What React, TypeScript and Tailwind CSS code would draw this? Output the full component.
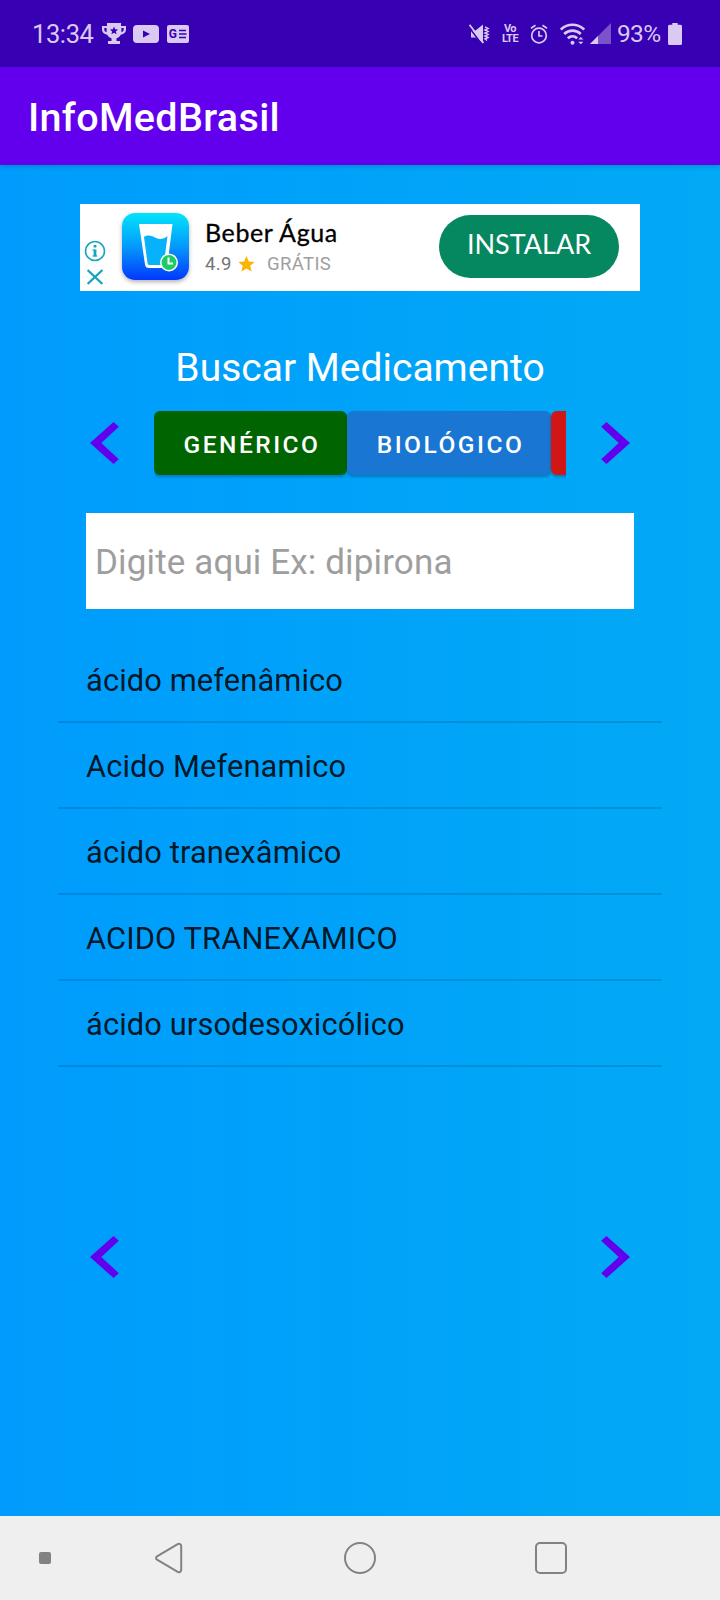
const CATEGORIES = [
  { label: 'GENÉRICO', className: 'w-[193px] bg-[#006400]' },
  { label: 'BIOLÓGICO', className: 'w-[204px] bg-[#1976d2]' },
  { label: '', className: 'w-[193px] bg-[#d01716]' },
]

const RESULTS = [
  'ácido mefenâmico',
  'Acido Mefenamico',
  'ácido tranexâmico',
  'ACIDO TRANEXAMICO',
  'ácido ursodesoxicólico',
]

function Trophy() {
  return (
    <svg width="24" height="21" viewBox="0 0 24 21" className="mb-px">
      <path fill="currentColor" d="M5 0h14v3h5v3.500c0 2.900-2 4.800-5.200 5.200-1 1.900-2.400 3-4.300 3.500v2.800H18v3H6v-3h3.500v-2.800c-1.900-.5-3.300-1.600-4.300-3.500C2 11.300 0 9.400 0 6.500V3h5zM2.300 5v1.500c0 1.300.8 2.200 2.300 2.700V5zm17.100 0v4.200c1.500-.5 2.300-1.400 2.300-2.700V5z" />
      <path fill="#3700b3" d="m12 3.500 1.100 2.800 3 .2-2.300 1.900.8 2.900-2.600-1.600-2.600 1.600.8-2.900-2.300-1.900 3-.2z" />
    </svg>
  )
}

function Play() {
  return (
    <svg width="26" height="18" viewBox="0 0 26 18">
      <rect width="26" height="18" rx="4" fill="currentColor" />
      <path d="M10 5.500v7l7-3.500z" fill="#3700b3" />
    </svg>
  )
}

function News() {
  return (
    <svg width="22" height="18" viewBox="0 0 22 18">
      <rect width="22" height="18" rx="2" fill="currentColor" />
      <text x="1.800" y="13.300" fontSize="12" fontWeight="700" fill="#3700b3" className="font-['Roboto',sans-serif]">G</text>
      <path d="M12 5.500h7M12 9h7.500M12 12.500h7" stroke="#3700b3" strokeWidth="1.700" />
    </svg>
  )
}

function Mute() {
  return (
    <svg width="21" height="20" viewBox="0 0 21 20" fill="none" stroke="currentColor">
      <path d="M2 6.500h4.500L14 .5v19l-7.500-6H2z" fill="currentColor" stroke="none" />
      <path d="M-.5 2.500 13 20.500" stroke="#3700b3" strokeWidth="1.500" />
      <path d="M.5.800 14.500 19" strokeWidth="1.700" />
      <path d="m16 3 3 1.500L16 6l3 1.500L16 9l3 1.500-3 1.500 3 1.500-3 1.500 2 1.500" strokeWidth="1.500" />
    </svg>
  )
}

function Alarm() {
  return (
    <svg width="18" height="20" viewBox="0 0 18 20" fill="none" stroke="currentColor" strokeWidth="1.700">
      <circle cx="9" cy="11.500" r="7.300" />
      <path d="M9 7v5h3.500M1 4.200 5.500 1.300M17 4.200l-4.500-2.900" />
    </svg>
  )
}

function Wifi() {
  return (
    <svg width="25" height="22" viewBox="0 0 25 22" fill="none" stroke="currentColor" strokeWidth="2.600">
      <path d="M.8 6.500c6.800-6.300 16.600-6.300 23.400 0M4.200 11c4.800-4.500 11.800-4.500 16.600 0M7.800 15.200c2.800-2.600 6.600-2.600 9.400 0" />
      <circle cx="12.500" cy="19.700" r="2" fill="currentColor" stroke="none" />
      <path d="m18.200 16.400 2.600-2.400 2.600 2.400zM18.200 18.800l2.600 2.400 2.600-2.400z" fill="currentColor" stroke="none" />
    </svg>
  )
}

function Signal() {
  return (
    <svg width="21" height="21" viewBox="0 0 21 21">
      <path d="M21 0v21H0z" fill="#7b52cc" />
      <path d="M8 13v8H0z" fill="currentColor" />
    </svg>
  )
}

function Battery() {
  return (
    <svg width="14" height="22" viewBox="0 0 14 22" fill="currentColor">
      <path d="M4.300 0h5.400v1.800H12.500a1.500 1.500 0 0 1 1.500 1.500V20.500a1.500 1.500 0 0 1-1.500 1.500h-11A1.500 1.500 0 0 1 0 20.500V3.300a1.500 1.500 0 0 1 1.500-1.500h2.800z" />
    </svg>
  )
}

function StatusBar() {
  return (
    <div className="flex h-[67px] items-center bg-[#3700b3] pr-[38px] pl-8 text-[#d9c9f3]">
      <span className="w-[70px] pt-0.5 text-[25.500px] leading-none tracking-[-0.400px]">13:34</span>
      <Trophy />
      <span className="ml-[7px]"><Play /></span>
      <span className="ml-2"><News /></span>
      <div className="ml-auto flex items-center">
        <Mute />
        <div className="ml-[11px] w-[18px] text-center text-[11px] leading-[10px] font-bold tracking-[-0.500px]">
          <div>Vo</div>
          <div>LTE</div>
        </div>
        <span className="ml-[11px]"><Alarm /></span>
        <span className="ml-3"><Wifi /></span>
        <span className="ml-[5px]"><Signal /></span>
        <span className="ml-[6px] w-[43px] pt-px text-[24.500px] leading-none tracking-[-0.700px]">93%</span>
        <span className="ml-2"><Battery /></span>
      </div>
    </div>
  )
}

function Arrow({ flip = false }: { flip?: boolean }) {
  return (
    <svg width="29" height="42" viewBox="0 0 29 42" className={flip ? '-scale-x-100' : ''}>
      <path d="M23.500 0 0 21l23.500 21 5.300-4.800L11.300 21 28.800 4.800z" fill="#6200ee" />
    </svg>
  )
}

function WaterIcon() {
  return (
    <svg width="67" height="67" viewBox="0 0 67 67" className="rounded-[13px] shadow-[0_2px_4px_rgba(0,0,0,0.3)]">
      <defs>
        <linearGradient id="tile" x1="0" y1="0" x2="0" y2="1">
          <stop offset="0" stopColor="#02e4fb" />
          <stop offset="0.500" stopColor="#0599fc" />
          <stop offset="1" stopColor="#0238fb" />
        </linearGradient>
      </defs>
      <rect width="67" height="67" fill="url(#tile)" />
      <path d="M17 11h33.500l-5 40.500a4 4 0 0 1-4 3.500H27a4 4 0 0 1-4-3.500z" fill="#fff" />
      <path d="M22 24c4-3 8-1 12 1s8 1 11.500-2L42 50a2 2 0 0 1-2 2H27.500a2 2 0 0 1-2-2z" fill="#06b2fb" />
      <circle cx="47" cy="49.500" r="9" fill="#fff" />
      <circle cx="47" cy="49.500" r="7.500" fill="#1ecb62" />
      <path d="M46.500 44.500v6H51" fill="none" stroke="#fff" strokeWidth="2" />
    </svg>
  )
}

function AdBanner() {
  return (
    <div className="flex h-[87px] w-[560px] bg-white">
      <div className="flex w-[30px] flex-col items-center gap-[7px] pt-9">
        <svg width="22" height="22" viewBox="0 0 22 22" fill="none" stroke="#16a5be" strokeWidth="1.700">
          <circle cx="11" cy="11" r="9.500" />
          <path d="M11 9.500v7M11 5v2.500" strokeWidth="2.800" />
          <path d="M8.500 10H11M8.500 16h5" strokeWidth="1.200" />
        </svg>
        <svg width="16" height="16" viewBox="0 0 17 16" stroke="#16a5be" strokeWidth="2.200">
          <path d="m.7.700 15.600 14.600M16.300.700.700 15.300" />
        </svg>
      </div>
      <div className="ml-3 pt-[9px]"><WaterIcon /></div>
      <div className="ml-4 w-[200px] pt-3">
        <div className="font-['Lato',sans-serif] text-[25px] leading-[32px] tracking-[0.600px] text-black [-webkit-text-stroke:0.300px_#000]">Beber Água</div>
        <div className="mt-1 flex items-center text-[18.500px] leading-[24px] tracking-[0.400px] text-[#757575]">
          <span>4.9</span>
          <svg width="17" height="16" viewBox="0 0 17 16" className="ml-[6px]">
            <path fill="#fbb400" d="m8.500 0 2.300 5.400 5.900.5-4.500 3.900 1.400 5.800-5.100-3.100-5.100 3.100 1.400-5.800L.3 5.900l5.900-.5z" />
          </svg>
          <span className="ml-3 text-[#9e9e9e]">GRÁTIS</span>
        </div>
      </div>
      <button className="mt-[11px] ml-auto mr-[21px] h-[63px] w-[180px] rounded-full bg-[#05875f] pb-1 font-['Lato',sans-serif] text-[27px] text-white">
        INSTALAR
      </button>
    </div>
  )
}

function NavBar() {
  return (
    <div className="flex h-[84px] items-center bg-[#efefef] pl-[39px]">
      <span className="size-3 rounded-[2px] bg-[#828282]" />
      <svg width="30" height="34" viewBox="0 0 30 34" className="ml-[102px]" fill="none" stroke="#828282" strokeWidth="2">
        <path d="M4 15.300 24.700 3.100a2.400 2.400 0 0 1 3.500 2.200v23.400a2.400 2.400 0 0 1-3.500 2.200L4 18.700a2 2 0 0 1 0-3.400z" />
      </svg>
      <span className="ml-[161px] size-8 rounded-full border-2 border-[#828282]" />
      <span className="ml-[159px] size-8 rounded-[5px] border-2 border-[#828282]" />
    </div>
  )
}

export default function App() {
  return (
    <div className="flex h-[1600px] w-[720px] flex-col overflow-hidden font-['Roboto',sans-serif]">
      <StatusBar />
      <header className="z-10 flex h-[98px] items-center bg-[#6200ee] pt-[3px] pl-7 shadow-[0_1px_5px_rgba(0,0,0,0.2)]">
        <h1 className="text-[39.500px] font-medium tracking-[0.350px] text-white">InfoMedBrasil</h1>
      </header>

      <main className="flex flex-1 flex-col items-center bg-linear-to-r from-[#009cfd] to-[#03a9f5] pt-[39px]">
        <AdBanner />

        <h2 className="mt-[51px] text-[39px] leading-[52px] text-white">Buscar Medicamento</h2>

        <div className="mt-[17px] flex h-[64px] w-[540px] items-center justify-between">
          <Arrow />
          <div className="flex h-[72px] w-[412px] overflow-hidden py-1">
            {CATEGORIES.map((c, i) => (
              <button
                key={i}
                className={`${c.className} shrink-0 rounded-[6px] pt-1 pl-[3px] text-[24.500px] font-medium tracking-[2.500px] text-white shadow-[0_2px_3px_rgba(0,0,0,0.25)]`}
              >
                {c.label}
              </button>
            ))}
          </div>
          <Arrow flip />
        </div>

        <input
          className="mt-[38px] h-24 w-[548px] bg-white px-[9px] pt-0.5 text-[35px] tracking-[0.130px] placeholder:text-[#9e9e9e]"
          placeholder="Digite aqui Ex: dipirona"
        />

        <ul className="mt-7 w-[604px]">
          {RESULTS.map(name => (
            <li key={name} className="flex h-[86px] items-center border-b-2 border-black/12 pt-1 pl-7 text-[30.800px] tracking-[0.130px] text-black/87">
              {name}
            </li>
          ))}
        </ul>

        <div className="mt-[169px] flex w-[540px] justify-between">
          <Arrow />
          <Arrow flip />
        </div>
      </main>

      <NavBar />
    </div>
  )
}
